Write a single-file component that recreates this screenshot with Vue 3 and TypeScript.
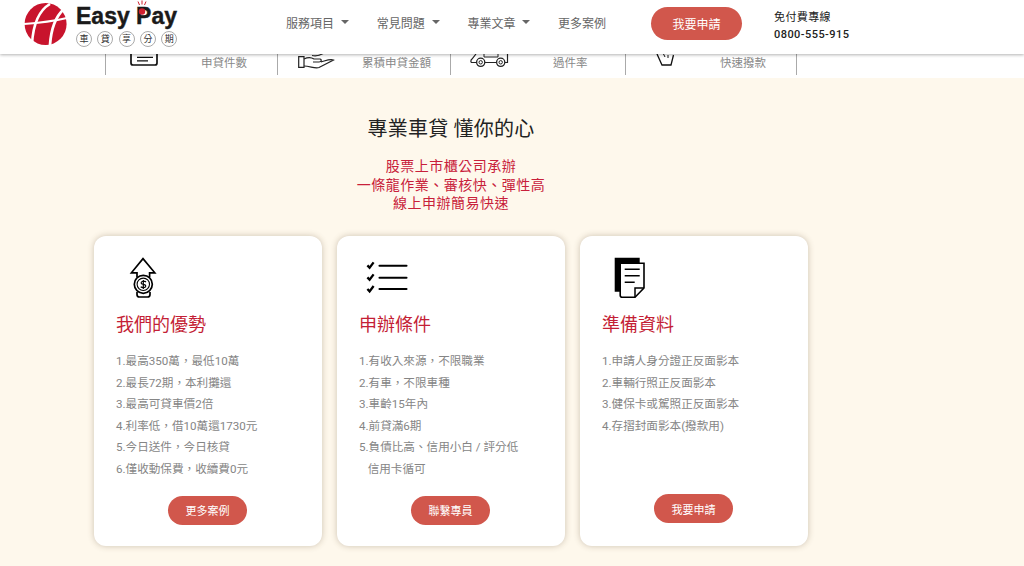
<script setup lang="ts">
interface Stat {
  label: string;
  icon: string;
  width: number;
  iconAt: number;
  labelAt: number;
}

interface Card {
  title: string;
  icon: string;
  lines: string[];
  button: string;
  buttonGap: number;
}

const navItems = [
  { label: "服務項目", caret: true },
  { label: "常見問題", caret: true },
  { label: "專業文章", caret: true },
  { label: "更多案例", caret: false },
];

const badges = ["車", "貸", "享", "分", "期"];

const stats: Stat[] = [
  { label: "申貸件數", icon: "doc", width: 172, iconAt: 24, labelAt: 95 },
  { label: "累積申貸金額", icon: "hand", width: 173, iconAt: 20, labelAt: 84 },
  { label: "過件率", icon: "car", width: 175, iconAt: 19, labelAt: 102 },
  { label: "快速撥款", icon: "bag", width: 172, iconAt: 30, labelAt: 94 },
];

const cards: Card[] = [
  {
    title: "我們的優勢",
    icon: "up",
    lines: [
      "1.最高350萬，最低10萬",
      "2.最長72期，本利攤還",
      "3.最高可貸車價2倍",
      "4.利率低，借10萬還1730元",
      "5.今日送件，今日核貸",
      "6.僅收動保費，收續費0元",
    ],
    button: "更多案例",
    buttonGap: 15,
  },
  {
    title: "申辦條件",
    icon: "list",
    lines: [
      "1.有收入來源，不限職業",
      "2.有車，不限車種",
      "3.車齡15年內",
      "4.前貸滿6期",
      "5.負債比高、信用小白 / 評分低",
      "\u00a0\u00a0\u00a0信用卡循可",
    ],
    button: "聯繫專員",
    buttonGap: 15,
  },
  {
    title: "準備資料",
    icon: "file",
    lines: [
      "1.申請人身分證正反面影本",
      "2.車輛行照正反面影本",
      "3.健保卡或駕照正反面影本",
      "4.存摺封面影本(撥款用)",
    ],
    button: "我要申請",
    buttonGap: 57,
  },
];
</script>

<template>
  <div class="page">
    <header class="topbar">
      <div class="logo">
        <svg class="logo-mark" width="44" height="44" viewBox="0 0 44 44">
          <circle cx="21.6" cy="21" r="21" fill="#c8142d" />
          <path d="M26 1C14 8 9 24 8 41" fill="none" stroke="#fff" stroke-width="2.6" />
          <path d="M40 6C31 14 27 27 26 42" fill="none" stroke="#fff" stroke-width="2.8" />
          <path d="M0 21C14 20 30 18 43 15" fill="none" stroke="#fff" stroke-width="2.2" />
        </svg>
        <div class="logo-text">
          <div class="logo-name">
            Easy <span class="logo-pay">Pay<svg class="logo-spark" width="12" height="16" viewBox="0 0 12 16">
              <circle cx="6" cy="11.5" r="3.2" fill="#d0202f" />
              <path d="M2 1.5L3.5 5M6 0.5V4.5M10 1.5L8.5 5" stroke="#d0202f" stroke-width="1" />
            </svg></span>
          </div>
          <div class="badges">
            <span v-for="b in badges" :key="b" class="badge">{{ b }}</span>
          </div>
        </div>
      </div>

      <nav class="nav">
        <a v-for="item in navItems" :key="item.label" class="nav-item">
          {{ item.label }}<i v-if="item.caret" class="caret"></i>
        </a>
      </nav>

      <button class="pill pill-lg">我要申請</button>

      <div class="hotline">
        <div class="hotline-label">免付費專線</div>
        <div class="hotline-num">0800-555-915</div>
      </div>
    </header>

    <section class="stats">
      <div v-for="s in stats" :key="s.label" class="stat" :style="{ width: s.width + 'px' }">
        <span class="stat-icon" :style="{ width: s.labelAt + 'px', paddingLeft: s.iconAt + 'px' }">
          <svg v-if="s.icon === 'doc'" width="28" height="14" viewBox="0 0 28 14">
            <path d="M1 -3V9Q1 11 3 11H25Q27 11 27 9V-3" fill="none" stroke="#111" stroke-width="1.7" />
            <path d="M7 3.3H23M7 6.8H18" stroke="#111" stroke-width="1.2" />
          </svg>
          <svg v-else-if="s.icon === 'hand'" width="37" height="16" viewBox="0 0 37 16">
            <path d="M0.7 2.7H6V13.3H0.7Z" fill="none" stroke="#222" stroke-width="1.2" />
            <path d="M6 5C10 3 13 3 16 5H22C24 5.5 23.5 8 21 8H15M6 12C12 12 17 15 21 13.5L35.5 6C32 4.5 27 7 23 8" fill="none" stroke="#222" stroke-width="1.2" />
            <path d="M14 1.5C18 2.5 22 1.5 26 -1" fill="none" stroke="#222" stroke-width="1.2" />
          </svg>
          <svg v-else-if="s.icon === 'car'" width="39" height="14" viewBox="0 0 39 14">
            <path d="M6.5 8.5H2C0.5 8.5 0.5 6 2 5L6 0M15 8.5H26M35 8.5H37.5V0" fill="none" stroke="#222" stroke-width="1.2" />
            <path d="M14 0V3H28V0" fill="none" stroke="#222" stroke-width="1" />
            <circle cx="10.7" cy="8.3" r="4.1" fill="#fff" stroke="#222" stroke-width="1.3" />
            <circle cx="30.7" cy="8.3" r="4.1" fill="#fff" stroke="#222" stroke-width="1.3" />
            <circle cx="10.7" cy="8.3" r="1.7" fill="none" stroke="#222" />
            <circle cx="30.7" cy="8.3" r="1.7" fill="none" stroke="#222" />
          </svg>
          <svg v-else width="18" height="13" viewBox="0 0 18 13">
            <path d="M1 0L6 11H15L17.5 1" fill="none" stroke="#111" stroke-width="1.3" />
            <path d="M7.5 0L9 3M12 1V4" stroke="#111" stroke-width="1" />
          </svg>
        </span>
        <span class="stat-label">{{ s.label }}</span>
      </div>
    </section>

    <main class="main">
      <h1 class="headline">專業車貸 懂你的心</h1>
      <p class="subhead">股票上市櫃公司承辦<br />一條龍作業、審核快、彈性高<br />線上申辦簡易快速</p>

      <div class="cards">
        <article v-for="c in cards" :key="c.title" class="card">
          <div class="card-icon">
            <svg v-if="c.icon === 'up'" width="44" height="44" viewBox="0 0 44 44">
              <path d="M16 21V16.8H10.4L22 2.6L33.8 16.8H28.6V21" fill="none" stroke="#000" stroke-width="1.7" />
              <circle cx="22.3" cy="28.3" r="9" fill="#fff" stroke="#000" stroke-width="1.7" />
              <circle cx="22.3" cy="28.3" r="6.2" fill="none" stroke="#000" stroke-width="1.1" />
              <path d="M16 36V38.5C16 40 17 41 18.5 41H26.5C28 41 29 40 29 38.5V36" fill="none" stroke="#000" stroke-width="1.7" />
              <path d="M25 26C23.6 24.8 20.1 24.9 20.1 26.9C20.1 29.2 24.8 27.6 24.8 30C24.8 31.9 21.2 32 19.7 30.7M22.3 24V33" fill="none" stroke="#000" stroke-width="1.2" />
            </svg>
            <svg v-else-if="c.icon === 'list'" width="44" height="44" viewBox="0 0 44 44">
              <path d="M3.4 9.4L5.6 11.8L9.6 6.4M3.4 21.4L5.6 23.8L9.6 18.4M3.4 33L5.6 35.4L9.6 30" fill="none" stroke="#000" stroke-width="2.3" />
              <path d="M15.5 9.7H42.5M15.5 21.7H42.5M15.5 33H42.5" stroke="#000" stroke-width="2.1" stroke-linecap="round" />
            </svg>
            <svg v-else width="44" height="44" viewBox="0 0 44 44">
              <path d="M7.7 1.7H32.7V8H13.5V35.7H7.7Z" fill="#000" />
              <path d="M13.2 7.2H37V32L28 41.2H15.2C14 41.2 13.2 40.4 13.2 39.2Z" fill="#fff" stroke="#000" stroke-width="1.6" />
              <path d="M37 32H28V41.2" fill="none" stroke="#000" stroke-width="1.5" />
              <path d="M17.7 13.3H32.7M17.7 19.7H32.7M17.7 26.3H27.7" stroke="#000" stroke-width="1.5" />
            </svg>
          </div>
          <h2 class="card-title">{{ c.title }}</h2>
          <ul class="card-list">
            <li v-for="line in c.lines" :key="line">{{ line }}</li>
          </ul>
          <button class="pill pill-sm" :style="{ marginTop: c.buttonGap + 'px' }">{{ c.button }}</button>
        </article>
      </div>
    </main>
  </div>
</template>

<style>
html,
body {
  margin: 0;
  height: 566px;
  overflow: hidden;
}
</style>

<style scoped>
.page {
  width: 1024px;
  height: 566px;
  overflow: hidden;
  background: #fef8ec;
  font-family: Roboto, "Noto Sans CJK TC", sans-serif;
  display: flex;
  flex-direction: column;
}

.topbar {
  height: 54px;
  box-sizing: border-box;
  padding-bottom: 8px;
  flex: none;
  background: #fff;
  display: flex;
  align-items: center;
  box-shadow: 0 1px 3px rgba(0, 0, 0, 0.3);
  position: relative;
  z-index: 2;
}

.logo {
  width: 286px;
  flex: none;
  padding-left: 24px;
  margin-top: 4px;
  box-sizing: border-box;
  display: flex;
  align-items: center;
  gap: 8px;
}

.logo-mark {
  flex: none;
}

.logo-name {
  font-family: "Liberation Sans", sans-serif;
  font-weight: 700;
  font-size: 23px;
  line-height: 24px;
  color: #1a1a1a;
  -webkit-text-stroke: 0.4px #1a1a1a;
  white-space: nowrap;
}

.logo-pay {
  position: relative;
}

.logo-spark {
  position: absolute;
  left: 0;
  top: -3px;
}

.badges {
  display: flex;
  gap: 5.3px;
  margin-top: 3px;
}

.badge {
  width: 16px;
  height: 16px;
  box-sizing: border-box;
  border: 1px solid #aaa;
  border-radius: 50%;
  font-size: 9px;
  line-height: 14px;
  text-align: center;
  color: #333;
}

.nav {
  width: 365px;
  flex: none;
  display: flex;
  gap: 27.7px;
  margin-bottom: 2px;
}

.nav-item {
  font-size: 12px;
  color: #666;
  white-space: nowrap;
  display: flex;
  align-items: center;
}

.caret {
  width: 0;
  height: 0;
  margin-left: 7px;
  border-left: 4.5px solid transparent;
  border-right: 4.5px solid transparent;
  border-top: 4px solid #666;
}

.pill {
  border: none;
  border-radius: 20px;
  background: #d1574c;
  color: #fff;
  font-family: inherit;
  padding: 0;
  display: block;
}

.pill-lg {
  width: 91px;
  height: 33px;
  font-size: 12px;
  flex: none;
}

.pill-sm {
  width: 79px;
  height: 29px;
  font-size: 11px;
  margin-left: auto;
  margin-right: auto;
  flex: none;
}

.hotline {
  margin-left: 32px;
  margin-top: 6px;
  font-size: 11px;
  color: #222;
  letter-spacing: 0.4px;
}

.hotline-label {
  line-height: 17px;
}

.hotline-num {
  line-height: 17px;
  font-size: 11px;
  font-weight: 500;
  letter-spacing: 0.45px;
}

.stats {
  height: 24px;
  flex: none;
  background: #fff;
  display: flex;
  padding-left: 105px;
  overflow: hidden;
}

.stat {
  box-sizing: border-box;
  height: 21px;
  border-left: 1px solid #aaa;
  display: flex;
  position: relative;
  font-size: 11.5px;
  color: #888;
}

.stat:last-child {
  border-right: 1px solid #aaa;
}

.stat-icon {
  flex: none;
  box-sizing: border-box;
  height: 21px;
  overflow: hidden;
}

.stat-icon svg {
  display: block;
}

.stat-label {
  flex: 1;
  line-height: 19px;
  white-space: nowrap;
}

.main {
  flex: 1;
  width: 714px;
  margin-left: 94px;
  display: flex;
  flex-direction: column;
  align-items: center;
}

.headline {
  margin: 37px 0 0;
  font-size: 20px;
  font-weight: 400;
  line-height: 28px;
  letter-spacing: 0.2px;
  color: #222;
}

.subhead {
  margin: 14px 0 0;
  font-size: 14px;
  line-height: 18.667px;
  text-align: center;
  color: #c8203a;
  letter-spacing: 0.5px;
}

.cards {
  margin-top: 23px;
  display: flex;
  gap: 15px;
  width: 100%;
}

.card {
  width: 228px;
  height: 310px;
  box-sizing: border-box;
  background: #fff;
  border-radius: 12px;
  box-shadow: 0 0 6px rgba(90, 70, 40, 0.3);
  padding: 20px 23px 0 22px;
  display: flex;
  flex-direction: column;
}

.card-icon {
  height: 46px;
  margin-left: 5px;
}

.card-icon svg {
  display: block;
}

.card-title {
  margin: 11px 0 0;
  font-size: 18px;
  line-height: 24px;
  font-weight: 400;
  color: #c41f36;
}

.card-list {
  list-style: none;
  margin: 14px 0 0;
  padding: 0;
  font-size: 11.6px;
  line-height: 21.6px;
  color: #858585;
  white-space: nowrap;
}
</style>
